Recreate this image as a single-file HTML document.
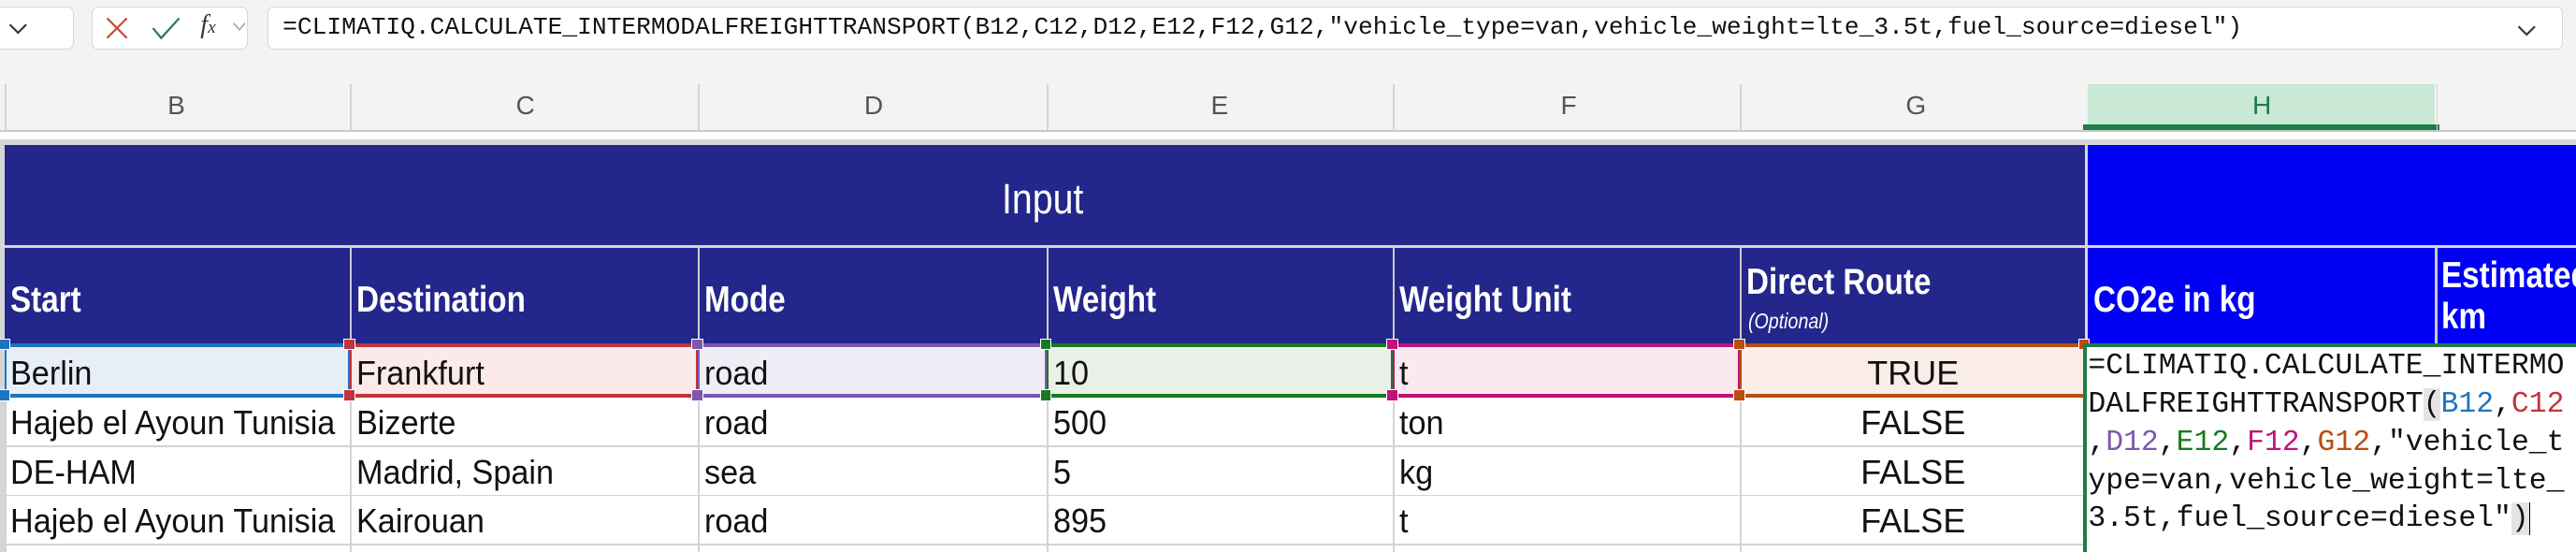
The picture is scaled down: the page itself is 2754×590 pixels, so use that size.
<!DOCTYPE html>
<html><head><meta charset="utf-8"><style>
html,body{margin:0;padding:0;width:2754px;height:590px;overflow:hidden;background:#fff}
#w{zoom:1.75638;position:relative;width:1568px;height:336px;overflow:hidden;background:#fff;font-family:"Liberation Sans Narrow","Liberation Sans",sans-serif}
.a{position:absolute;box-sizing:border-box}
.t{white-space:nowrap}
.mono{font-family:"Liberation Mono",monospace}
.hd{position:absolute;color:#fff;font-weight:bold;font-size:22px;white-space:nowrap;line-height:1;transform:scaleX(0.86);transform-origin:0 0}
.c{position:absolute;font-size:20.5px;color:#111;white-space:nowrap;line-height:1;transform:scaleX(0.95);transform-origin:0 0}
.cc{position:absolute;font-size:20.5px;color:#111;white-space:nowrap;line-height:1;text-align:center}
.vl{position:absolute;width:1px;background:#d4d4d4}
.hl{position:absolute;height:1px;background:#d4d4d4;left:0;width:1268px}
.sq{position:absolute;width:6px;height:6px;border:1px solid #fff;box-sizing:content-box}
</style></head><body><div id="w">
<!-- toolbar -->
<div class="a" style="left:0;top:0;width:1568px;height:79px;background:#f3f3f3"></div>
<div class="a" style="left:-10px;top:4px;width:55px;height:26px;background:#fff;border:1px solid #d6d6d6;border-radius:4px"></div>
<svg class="a" style="left:4px;top:12px" width="14" height="10"><path d="M2 3 L7 8 L12 3" fill="none" stroke="#333" stroke-width="1.2"/></svg>
<div class="a" style="left:56px;top:4px;width:95px;height:26px;background:#fff;border:1px solid #d6d6d6;border-radius:4px"></div>
<svg class="a" style="left:63px;top:9px" width="16" height="16"><path d="M2 2 L14 14 M14 2 L2 14" stroke="#c8452c" stroke-width="1.2"/></svg>
<svg class="a" style="left:91px;top:9px" width="20" height="16"><path d="M2 8 L7 14 L18 2" fill="none" stroke="#2e7d4f" stroke-width="1.3"/></svg>
<div class="a t" style="left:122px;top:6px;font-family:'Liberation Serif',serif;font-style:italic;font-size:16px;color:#333">f<span style="font-size:11px">x</span></div>
<svg class="a" style="left:141px;top:13px" width="9" height="7"><path d="M1 1 L4.5 5 L8 1" fill="none" stroke="#aaa" stroke-width="1"/></svg>
<div class="a" style="left:163px;top:4px;width:1397px;height:26px;background:#fff;border:1px solid #d6d6d6;border-radius:4px"></div>
<div class="a t mono" style="left:172px;top:8px;font-size:14.95px;color:#111;line-height:18px">=CLIMATIQ.CALCULATE_INTERMODALFREIGHTTRANSPORT(B12,C12,D12,E12,F12,G12,"vehicle_type=van,vehicle_weight=lte_3.5t,fuel_source=diesel")</div>
<svg class="a" style="left:1531px;top:13px" width="14" height="10"><path d="M2 3 L7 8 L12 3" fill="none" stroke="#333" stroke-width="1.2"/></svg>
<!-- column headers -->
<div class="a" style="left:1271px;top:51px;width:211px;height:27px;background:#c9e8d6"></div>
<div class="a" style="left:1268px;top:76px;width:217px;height:3px;background:#1e7d46"></div>
<div class="a" style="left:0;top:79px;width:1568px;height:1px;background:#c8c8c8"></div>
<div class="vl" style="left:3px;top:51px;height:28px"></div>
<div class="vl" style="left:213px;top:51px;height:28px"></div>
<div class="vl" style="left:425px;top:51px;height:28px"></div>
<div class="vl" style="left:637px;top:51px;height:28px"></div>
<div class="vl" style="left:848px;top:51px;height:28px"></div>
<div class="vl" style="left:1059px;top:51px;height:28px"></div>
<div class="vl" style="left:1483px;top:51px;height:28px"></div>
<div style="position:absolute;top:55px;left:0;font-family:'Liberation Sans',sans-serif;font-size:16px;color:#555;line-height:18px">
<span class="a" style="left:102px">B</span>
<span class="a" style="left:314px">C</span>
<span class="a" style="left:526px">D</span>
<span class="a" style="left:737px">E</span>
<span class="a" style="left:950px">F</span>
<span class="a" style="left:1160px">G</span>
<span class="a" style="left:1371px;color:#1e7d46">H</span>
</div>
<!-- table header -->
<div class="a" style="left:0;top:85px;width:1568px;height:3px;background:#d6d6d6"></div>
<div class="a" style="left:0;top:88px;width:3px;height:248px;background:#d6d6d6"></div>
<div class="a" style="left:3px;top:88px;width:1267px;height:122px;background:#23268a"></div>
<div class="a" style="left:1270px;top:88px;width:298px;height:122px;background:#0000f5"></div>
<div class="a" style="left:3px;top:149px;width:1565px;height:2px;background:#d6d6d6"></div>
<div class="a" style="left:1269px;top:88px;width:2px;height:122px;background:#d6d6d6"></div>
<div class="vl" style="left:213px;top:151px;height:59px;background:#ccc"></div>
<div class="vl" style="left:425px;top:151px;height:59px;background:#ccc"></div>
<div class="vl" style="left:637px;top:151px;height:59px;background:#ccc"></div>
<div class="vl" style="left:848px;top:151px;height:59px;background:#ccc"></div>
<div class="vl" style="left:1059px;top:151px;height:59px;background:#ccc"></div>
<div class="a" style="left:1482px;top:151px;width:2px;height:59px;background:#ccc"></div>
<div class="hd" style="left:610px;top:108px;font-size:26px;font-weight:normal">Input</div>
<div class="hd" style="left:6px;top:172px">Start</div>
<div class="hd" style="left:217px;top:172px">Destination</div>
<div class="hd" style="left:429px;top:172px">Mode</div>
<div class="hd" style="left:641px;top:172px">Weight</div>
<div class="hd" style="left:852px;top:172px">Weight Unit</div>
<div class="hd" style="left:1063px;top:161px">Direct Route</div>
<div class="hd" style="left:1064px;top:189px;font-size:13px;font-weight:normal;font-style:italic">(Optional)</div>
<div class="hd" style="left:1274px;top:172px">CO2e in kg</div>
<div class="hd" style="left:1486px;top:157px">Estimated</div>
<div class="hd" style="left:1486px;top:182px">km</div>
<!-- data grid -->
<div class="hl" style="top:271px"></div>
<div class="hl" style="top:301px"></div>
<div class="hl" style="top:331px"></div>
<div class="vl" style="left:3px;top:210px;height:126px"></div>
<div class="vl" style="left:213px;top:210px;height:126px"></div>
<div class="vl" style="left:425px;top:210px;height:126px"></div>
<div class="vl" style="left:637px;top:210px;height:126px"></div>
<div class="vl" style="left:848px;top:210px;height:126px"></div>
<div class="vl" style="left:1059px;top:210px;height:126px"></div>
<!-- row 1 highlighted cells -->
<div class="a" style="left:3px;top:209px;width:210px;height:33px;background:#e8eef8;border-top:2.5px solid #1f74c0;border-bottom:2.5px solid #1f74c0;border-left:1.5px solid #1f74c0;border-right:1.5px solid #1f74c0"></div>
<div class="a" style="left:213px;top:209px;width:212px;height:33px;background:#fbeaea;border-top:2.5px solid #c0343a;border-bottom:2.5px solid #c0343a;border-left:1.5px solid #c0343a;border-right:1.5px solid #c0343a"></div>
<div class="a" style="left:425px;top:209px;width:212px;height:33px;background:#f1edf6;border-top:2.5px solid #7d57ae;border-bottom:2.5px solid #7d57ae;border-left:1.5px solid #7d57ae;border-right:1.5px solid #7d57ae"></div>
<div class="a" style="left:637px;top:209px;width:211px;height:33px;background:#eaf0e8;border-top:2.5px solid #177a1d;border-bottom:2.5px solid #177a1d;border-left:1.5px solid #177a1d;border-right:1.5px solid #177a1d"></div>
<div class="a" style="left:848px;top:209px;width:211px;height:33px;background:#fbe9ef;border-top:2.5px solid #c0137a;border-bottom:2.5px solid #c0137a;border-left:1.5px solid #c0137a;border-right:1.5px solid #c0137a"></div>
<div class="a" style="left:1059px;top:209px;width:211px;height:33px;background:#faede7;border-top:2.5px solid #b84e12;border-bottom:2.5px solid #b84e12;border-left:1.5px solid #b84e12;border-right:1.5px solid #b84e12"></div>
<div class="sq" style="left:-1px;top:206px;background:#1f74c0"></div><div class="sq" style="left:-1px;top:237px;background:#1f74c0"></div>
<div class="sq" style="left:209px;top:206px;background:#c0343a"></div><div class="sq" style="left:209px;top:237px;background:#c0343a"></div>
<div class="sq" style="left:421px;top:206px;background:#7d57ae"></div><div class="sq" style="left:421px;top:237px;background:#7d57ae"></div>
<div class="sq" style="left:633px;top:206px;background:#177a1d"></div><div class="sq" style="left:633px;top:237px;background:#177a1d"></div>
<div class="sq" style="left:844px;top:206px;background:#c0137a"></div><div class="sq" style="left:844px;top:237px;background:#c0137a"></div>
<div class="sq" style="left:1055px;top:206px;background:#b84e12"></div><div class="sq" style="left:1055px;top:237px;background:#b84e12"></div>
<div class="sq" style="left:1265px;top:206px;background:#b84e12"></div>
<!-- data text -->
<div class="c" style="left:6px;top:217px">Berlin</div>
<div class="c" style="left:217px;top:217px">Frankfurt</div>
<div class="c" style="left:429px;top:217px">road</div>
<div class="c" style="left:641px;top:217px">10</div>
<div class="c" style="left:852px;top:217px">t</div>
<div class="cc" style="left:1059px;width:211px;top:217px">TRUE</div>
<div class="c" style="left:6px;top:247px">Hajeb el Ayoun Tunisia</div>
<div class="c" style="left:217px;top:247px">Bizerte</div>
<div class="c" style="left:429px;top:247px">road</div>
<div class="c" style="left:641px;top:247px">500</div>
<div class="c" style="left:852px;top:247px">ton</div>
<div class="cc" style="left:1059px;width:211px;top:247px">FALSE</div>
<div class="c" style="left:6px;top:277px">DE-HAM</div>
<div class="c" style="left:217px;top:277px">Madrid, Spain</div>
<div class="c" style="left:429px;top:277px">sea</div>
<div class="c" style="left:641px;top:277px">5</div>
<div class="c" style="left:852px;top:277px">kg</div>
<div class="cc" style="left:1059px;width:211px;top:277px">FALSE</div>
<div class="c" style="left:6px;top:307px">Hajeb el Ayoun Tunisia</div>
<div class="c" style="left:217px;top:307px">Kairouan</div>
<div class="c" style="left:429px;top:307px">road</div>
<div class="c" style="left:641px;top:307px">895</div>
<div class="c" style="left:852px;top:307px">t</div>
<div class="cc" style="left:1059px;width:211px;top:307px">FALSE</div>
<!-- editing cell -->
<div class="a" style="left:1268px;top:209px;width:302px;height:130px;background:#fff;border:2.5px solid #1e7d46"></div>
<div class="a mono" style="left:1271px;top:212px;width:300px;font-size:17.9px;line-height:23.2px;color:#111;white-space:pre">=CLIMATIQ.CALCULATE_INTERMO
DALFREIGHTTRANSPORT<span style="background:#e4e4e4">(</span><span style="color:#1f74c0">B12</span>,<span style="color:#c0343a">C12</span>
,<span style="color:#7d57ae">D12</span>,<span style="color:#177a1d">E12</span>,<span style="color:#c0137a">F12</span>,<span style="color:#b84e12">G12</span>,"vehicle_t
ype=van,vehicle_weight=lte_
3.5t,fuel_source=diesel"<span style="background:#e4e4e4">)</span><span style="border-left:1px solid #000"></span></div>
</div></body></html>
